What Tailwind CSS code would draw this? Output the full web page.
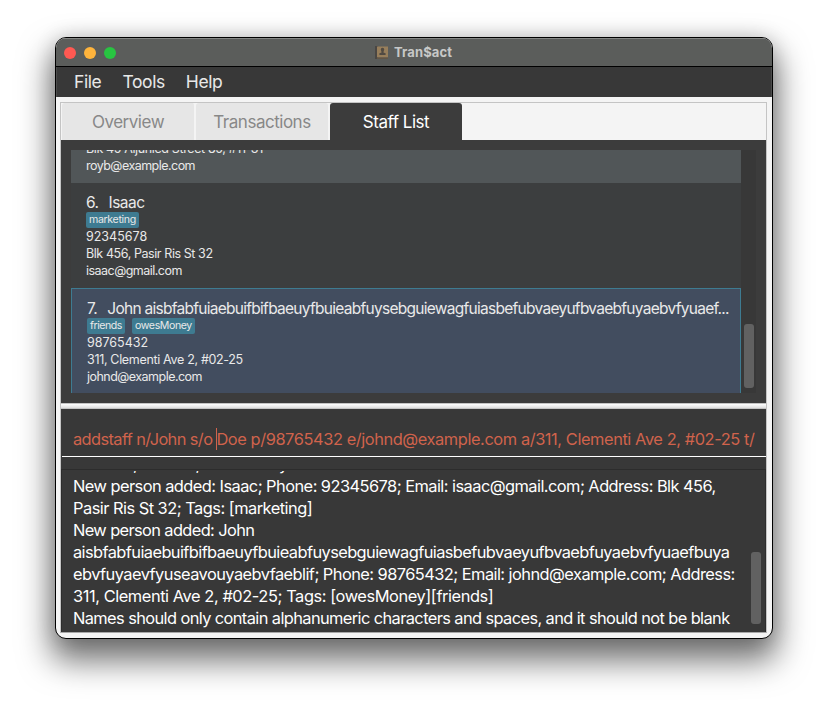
<!DOCTYPE html>
<html lang="en">
<head>
<meta charset="utf-8">
<title>Tran$act</title>
<script src="https://cdn.jsdelivr.net/npm/@tailwindcss/browser@4"></script>
</head>
<body class="w-[828px] h-[712px] overflow-hidden bg-white font-['Inter','Liberation_Sans',sans-serif] pt-[37px] pl-[55px] whitespace-nowrap">
<div class="w-[718px] h-[602px] rounded-[11px] border border-black bg-[#f4f4f4] overflow-hidden flex flex-col shadow-[0_18px_32px_4px_rgba(0,0,0,0.55),0_0_20px_rgba(0,0,0,0.15)]">
  <header class="h-[29px] shrink-0 bg-[#5b5d5b] border-t border-t-[#858785] border-b border-b-black flex items-center relative pl-2">
    <div class="flex gap-2"><i class="size-3 rounded-full bg-[#ff5952]"></i><i class="size-3 rounded-full bg-[#ffb43c]"></i><i class="size-3 rounded-full bg-[#28c541]"></i></div>
    <div class="flex items-center ml-[259px] gap-[5px]">
      <svg class="w-[14px] h-[13px] -mt-px" viewBox="0 0 14 13"><path fill="#4a4744" d="M0 0h3v13H0z"/><path fill="#977e5b" d="M2 .5h11v11H2z"/><path fill="#625545" d="M2 11.5h11V13H2z"/><path fill="#514a42" d="M6 4.2a1.7 1.7 0 1 1 3 0L8.4 6.5l2.2.8V9H4.4V7.3l2.2-.8z"/></svg>
      <span class="text-[13px] leading-4 font-bold text-[#c7c8c7] tracking-[0.12px] -mt-[2px]">Tran$act</span>
    </div>
  </header>
  <nav class="h-[30px] shrink-0 bg-[#383838] flex items-center pl-[17px] text-[17.5px] tracking-[-0.4px] text-[#e8e8e8] gap-[21px] border-x border-[#4c4c4c]"><span>File</span><span>Tools</span><span>Help</span></nav>
  <main class="mt-[5px] ml-1 w-[707px] h-[531px] border border-[#c4c4c4] border-b-[#a8a8a8] bg-[#383838] flex flex-col shrink-0">
    <div class="h-[37px] shrink-0 bg-[#f4f4f4] flex text-[17px] tracking-[-0.48px] leading-[38px] text-center text-[#888]">
      <span class="w-[134px] ml-px rounded-t-[3px] bg-[#e6e6e6] border-r-2 border-[#f4f4f4]">Overview</span><span class="w-[133px] rounded-t-[3px] bg-[#e6e6e6] border-r border-[#f4f4f4]">Transactions</span><span class="w-[132px] ml-px rounded-t-[3px] bg-[#3c3c3c] text-white">Staff List</span>
    </div>
    <section class="h-[263px] shrink-0 bg-[#3c3c3c] p-[10px] flex">
      <div class="w-[670px] h-[243px] overflow-hidden text-[12.5px] leading-[17px] tracking-[-0.53px] text-[#e9e9e9]">
        <div class="h-[33px] bg-[#515658] pl-[15px] overflow-hidden"><div class="-mt-[10px] tracking-[-0.37px]">Blk 45 Aljunied Street 85, #11-31</div><div>royb@example.com</div></div>
        <div class="h-[105px] bg-[#3c3e3f] pl-[15px] pt-[11px]">
          <div class="text-[15.5px] leading-[18px] flex gap-[10px]"><span>6.</span><span>Isaac</span></div>
          <div class="flex gap-[7px] text-[10.6px] leading-4 tracking-[-0.35px]"><span class="bg-[#3e7b91] rounded-[2px] px-[3px]">marketing</span></div>
          <div class="tracking-[0px]">92345678</div><div class="tracking-[-0.42px]">Blk 456, Pasir Ris St 32</div><div>isaac@gmail.com</div>
        </div>
        <div class="h-[106px] bg-[#424d5f] border border-[#3e7b91] pl-[15px] pt-[11px]">
          <div class="text-[15.5px] leading-[18px] flex gap-[10px]"><span>7.</span><span class="tracking-[-0.72px]">John aisbfabfuiaebuifbifbaeuyfbuieabfuysebguiewagfuiasbefubvaeyufbvaebfuyaebvfyuaef...</span></div>
          <div class="flex gap-[7px] text-[10.6px] leading-4 tracking-[-0.45px]"><span class="bg-[#3e7b91] rounded-[2px] px-[3px]">friends</span><span class="bg-[#3e7b91] rounded-[2px] px-[3px] tracking-[-0.4px]">owesMoney</span></div>
          <div class="tracking-[0px]">98765432</div><div class="tracking-[-0.33px]">311, Clementi Ave 2, #02-25</div><div>johnd@example.com</div>
        </div>
      </div>
      <div class="w-[15px] bg-[#383838] pt-[174px] pl-[3px]"><div class="w-[10px] h-16 rounded-[3px] bg-[#616161]"></div></div>
    </section>
    <div class="h-[6px] shrink-0 bg-linear-to-b from-white to-[#dedede] border-y border-[#c4c4c4]"></div>
    <div class="h-[48px] shrink-0 border-b border-white ml-px pl-[11px] pr-[11px] pt-[19px]"><div class="relative overflow-hidden text-[16.4px] leading-[22px] tracking-[-0.42px] text-[#d0634c]"><span class="tracking-[-0.6px]">addstaff n/John s/o </span>Doe p/98765432 e/johnd@example.com a/311, Clementi Ave 2, #02-25 t/<i class="absolute left-[143px] top-0 w-px h-[22px] bg-[#d0634c]"></i></div></div>
    <div class="flex mt-[12px] border border-[#2c2c2c] border-b-0 h-[163px] pl-[11px] shrink-0">
      <div class="w-[678px] h-[161px] mt-px overflow-hidden text-[16.4px] leading-[22px] tracking-[-0.52px] text-white"><div class="-mt-[18px]">Block 31, #02-25, West Valley</div><div class="tracking-[-0.545px]">New person added: Isaac; Phone: 92345678; Email: isaac@gmail.com; Address: Blk 456,</div><div>Pasir Ris St 32; Tags: [marketing]</div><div class="tracking-[-0.62px]">New person added: John</div><div class="tracking-[-0.585px]">aisbfabfuiaebuifbifbaeuyfbuieabfuysebguiewagfuiasbefubvaeyufbvaebfuyaebvfyuaefbuya</div><div class="tracking-[-0.55px]">ebvfuyaevfyuseavouyaebvfaeblif; Phone: 98765432; Email: johnd@example.com; Address:</div><div class="tracking-[-0.43px]">311, Clementi Ave 2, #02-25; Tags: [owesMoney][friends]</div><div class="tracking-[-0.6px]">Names should only contain alphanumeric characters and spaces, and it should not be blank</div></div>
      <div class="mt-[82px] w-[10px] h-[72px] rounded-[3px] bg-[#616161]"></div>
    </div>
  </main>
</div>
</body>
</html>
